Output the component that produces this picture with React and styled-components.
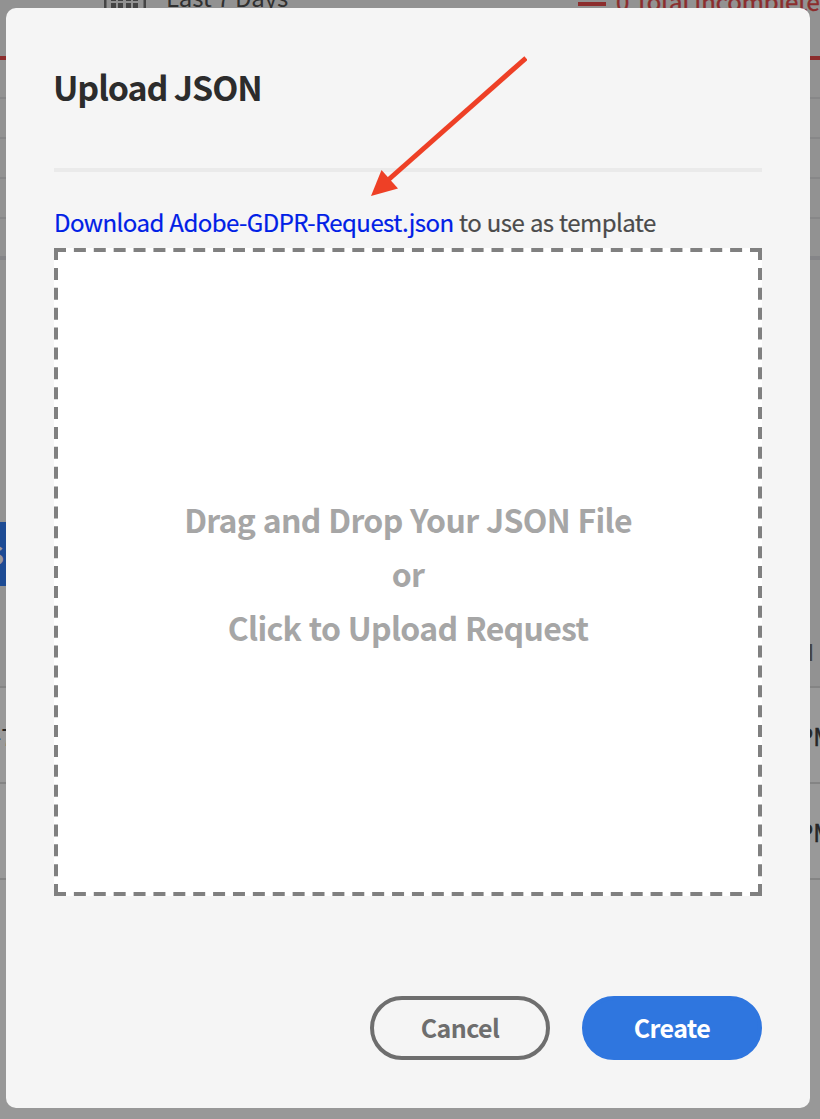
import React from "react";
import styled, { createGlobalStyle } from "styled-components";

const GlobalStyle = createGlobalStyle`
  * { box-sizing: border-box; }
  body {
    margin: 0;
    overflow: hidden;
    font-family: "Noto Sans CJK SC", "Open Sans", sans-serif;
  }
`;

const Stage = styled.div`
  display: grid;
  width: 820px;
  height: 1119px;
  overflow: hidden;
  background: #929292;
  > * { grid-area: 1 / 1; }
`;

const Backdrop = styled.div`
  display: flex;
  flex-direction: column;
  width: 820px;
  height: 1119px;
  overflow: hidden;
`;

const FilterBar = styled.div`
  display: flex;
  justify-content: space-between;
  height: 56px;
  padding-left: 104px;
  white-space: nowrap;
`;

const Range = styled.div`
  display: flex;
  gap: 20px;
  height: 12px;
  font-size: 24px;
  line-height: 36px;
  color: #303030;
  svg { display: block; }
`;

const RangeText = styled.span`
  display: block;
  margin-top: -21px;
  letter-spacing: -0.2px;
`;

const Legend = styled.div`
  display: flex;
  gap: 10px;
  width: 242px;
  font-size: 24px;
  line-height: 36px;
  color: #8c2d2d;
`;

const Swatch = styled.span`
  flex: none;
  width: 28px;
  height: 4px;
  margin-top: 2px;
  background: #8c2d2d;
`;

const LegendText = styled.span`
  display: block;
  margin-top: -17px;
  letter-spacing: -0.15px;
  -webkit-text-stroke: 0.4px currentColor;
`;

const Rule = styled.div`
  flex: none;
  height: ${(p) => p.$size || 2}px;
  margin-top: ${(p) => p.$gap || 0}px;
  background: ${(p) => p.$color || "#878788"};
`;

const PageAction = styled.div`
  display: flex;
  align-items: center;
  justify-content: flex-end;
  flex: none;
  width: 6px;
  height: 64px;
  margin-top: 262px;
  padding: 0 2px 2px 0;
  overflow: hidden;
  font-size: 26px;
  font-weight: 700;
  color: #999;
  background: #1d4b94;
`;

const TableHead = styled.div`
  flex: none;
  height: 100px;
  padding: 47px 6px 0 0;
  text-align: right;
  font-size: 22px;
  line-height: 36px;
  font-weight: 700;
  color: #444;
`;

const TableRow = styled.div`
  display: flex;
  flex: none;
  align-items: center;
  justify-content: space-between;
  height: 96px;
  border-top: 2px solid #848484;
  background: #999;
  font-size: 24px;
  color: #262626;
`;

const IdCell = styled.span`
  margin-left: -7px;
`;

const TimeCell = styled.span`
  width: 22px;
  white-space: nowrap;
  -webkit-text-stroke: 0.5px currentColor;
`;

const TableEnd = styled.div`
  flex: 1;
  border-top: 2px solid #848484;
  background: #989898;
`;

const Dialog = styled.section`
  z-index: 1;
  display: flex;
  flex-direction: column;
  width: 804px;
  height: 1100px;
  margin: 8px 0 0 6px;
  padding: 48px;
  border-radius: 10px;
  background: #f5f5f5;
`;

const Title = styled.h1`
  margin: 6px 0 0 -1px;
  height: 106px;
  font-size: 34px;
  line-height: 50px;
  font-weight: 700;
  letter-spacing: -1.1px;
  color: #2c2c2c;
`;

const Divider = styled.hr`
  flex: none;
  width: 100%;
  height: 4px;
  margin: 0;
  border: 0;
  background: #eaeaea;
`;

const Hint = styled.p`
  height: 36px;
  margin: 32px 0 8px;
  font-size: 24px;
  line-height: 36px;
  letter-spacing: -0.56px;
  word-spacing: 0.8px;
  white-space: nowrap;
  color: #4b4b4b;
  -webkit-text-stroke: 0.2px currentColor;
`;

const TemplateLink = styled.a`
  color: #0020e6;
`;

const DropZone = styled.div`
  position: relative;
  display: flex;
  flex-direction: column;
  align-items: center;
  flex: none;
  height: 648px;
  padding-top: 244px;
  background: #fff;
  font-size: 32px;
  line-height: 54px;
  font-weight: 700;
  letter-spacing: -0.7px;
  word-spacing: 1px;
  color: #a6a6a6;

  &::after {
    content: "";
    position: absolute;
    box-sizing: border-box;
    top: 0;
    left: 0;
    width: 50%;
    height: 50%;
    border: 2px dashed #808080;
    transform: scale(2);
    transform-origin: 0 0;
  }
`;

const Actions = styled.div`
  display: flex;
  justify-content: flex-end;
  gap: 32px;
  margin-top: 100px;
`;

const Button = styled.button`
  width: 180px;
  height: 64px;
  padding: 0 0 3px;
  border: 4px solid ${(p) => (p.$primary ? "#2f76df" : "#6e6e6e")};
  border-radius: 32px;
  background: ${(p) => (p.$primary ? "#2f76df" : "transparent")};
  font: 700 25px/36px "Noto Sans CJK SC", sans-serif;
  letter-spacing: -0.6px;
  color: ${(p) => (p.$primary ? "#fff" : "#6e6e6e")};
`;

const Arrow = styled.svg`
  z-index: 2;
  width: 156px;
  height: 142px;
  margin: 55px 0 0 371px;
`;

function CalendarIcon() {
  return (
    <svg width="42" height="8" viewBox="0 0 42 8" fill="#454545">
      <path d="M0 0h2.5v8H0zM39.500 0H42v8h-2.500z" />
      <path d="M7 0h5v1H7zM14 0h5v1h-5zM22 0h5v1h-5zM29 0h5v1h-5z" />
      <path d="M7 3h5v5H7zM14 3h5v5h-5zM22 3h5v5h-5zM29 3h5v5h-5z" />
    </svg>
  );
}

export default function App() {
  return (
    <>
      <GlobalStyle />
      <Stage>
        <Backdrop aria-hidden="true">
          <FilterBar>
            <Range>
              <CalendarIcon />
              <RangeText>Last 7 Days</RangeText>
            </Range>
            <Legend>
              <Swatch />
              <LegendText>0 Total Incomplete</LegendText>
            </Legend>
          </FilterBar>
          <Rule $size={4} $color="#8c2d2d" />
          <Rule $gap={37} />
          <Rule $gap={38} />
          <Rule $gap={38} />
          <Rule $gap={38} />
          <Rule $gap={37} $size={4} $color="#858588" />
          <PageAction>S</PageAction>
          <TableHead>N</TableHead>
          <TableRow>
            <IdCell>-7</IdCell>
            <TimeCell>PM</TimeCell>
          </TableRow>
          <TableRow>
            <span />
            <TimeCell>PM</TimeCell>
          </TableRow>
          <TableEnd />
        </Backdrop>
        <Dialog role="dialog" aria-label="Upload JSON">
          <Title>Upload JSON</Title>
          <Divider />
          <Hint>
            <TemplateLink>Download Adobe-GDPR-Request.json</TemplateLink> to use as template
          </Hint>
          <DropZone>
            <span>Drag and Drop Your JSON File</span>
            <span>or</span>
            <span>Click to Upload Request</span>
          </DropZone>
          <Actions>
            <Button>Cancel</Button>
            <Button $primary>Create</Button>
          </Actions>
        </Dialog>
        <Arrow viewBox="371 55 156 142">
          <path d="M526 58L387 181" stroke="#ee4026" strokeWidth="5" />
          <path d="M371 196L381.500 170L398 188.500Z" fill="#ee4026" />
        </Arrow>
      </Stage>
    </>
  );
}
